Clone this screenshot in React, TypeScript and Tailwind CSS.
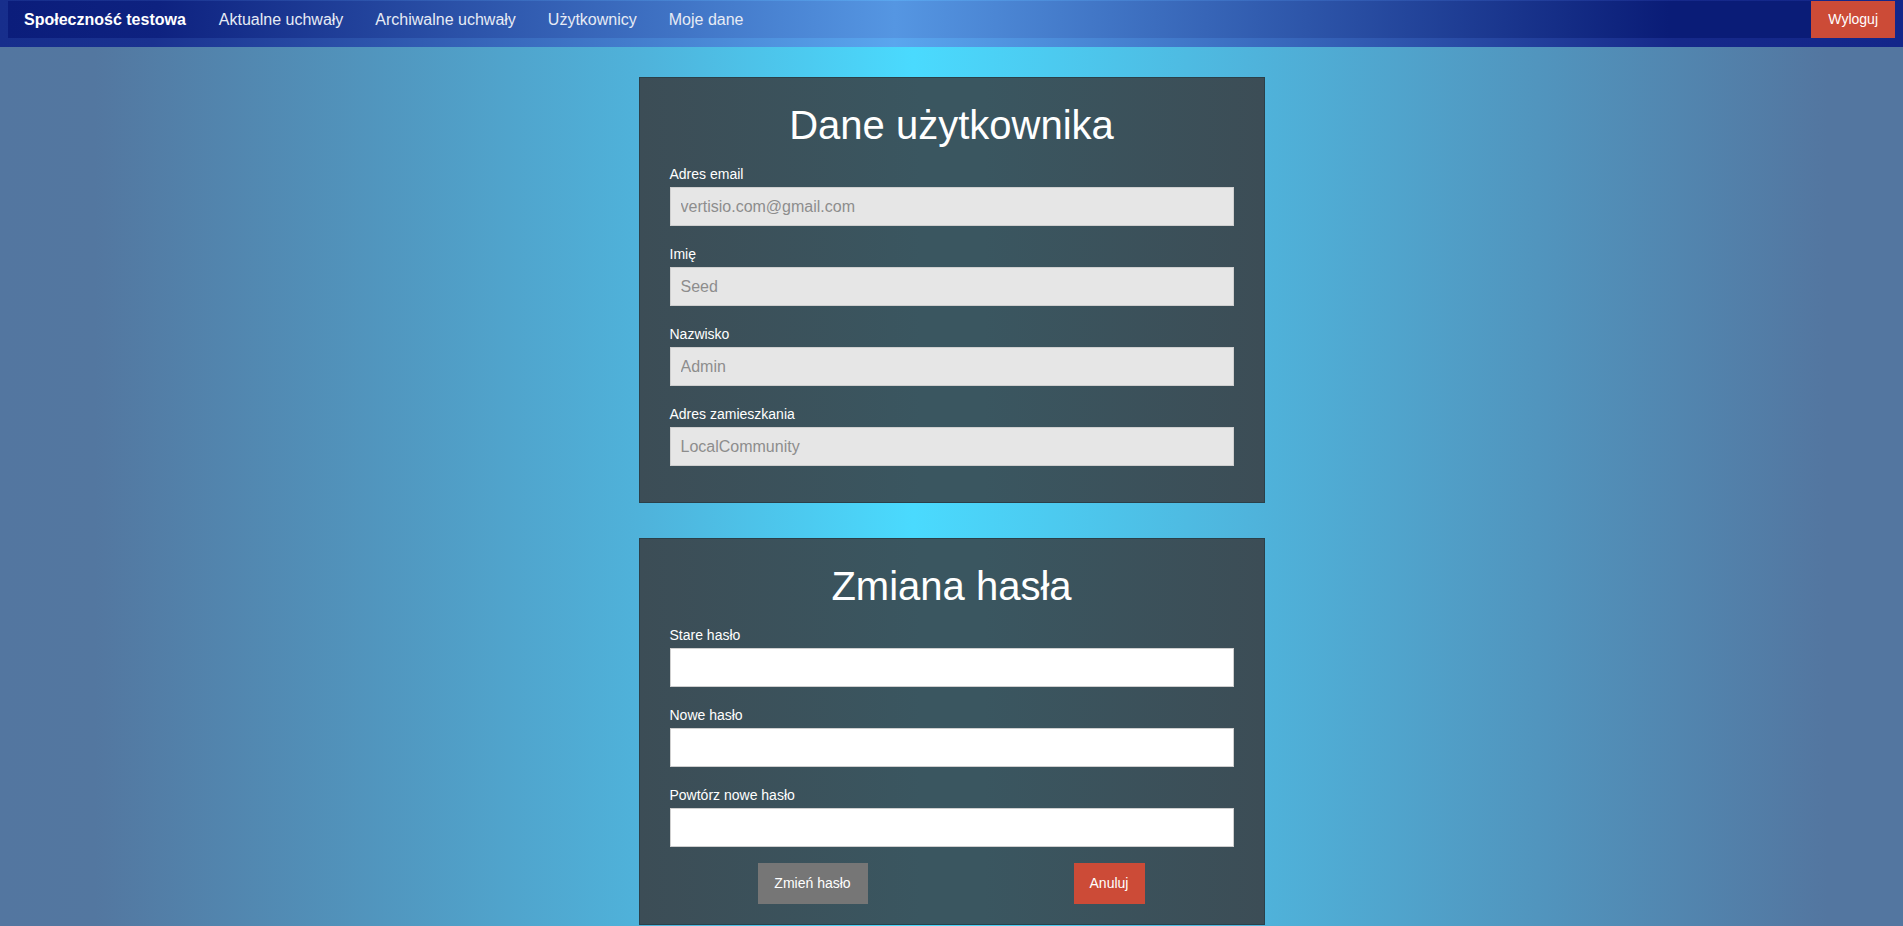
import React from 'react'

const font = { fontFamily: '"Liberation Sans", Arial, sans-serif' }

function Field({ label, value, disabled }: { label: string; value?: string; disabled?: boolean }) {
  return (
    <div className="mb-[19px]">
      <label className="block text-[14px] leading-[18px] text-white mb-[4px]">{label}</label>
      <input
        type={disabled ? 'text' : 'password'}
        defaultValue={value}
        disabled={disabled}
        className={`block w-full h-[39px] px-[10px] text-[16px] border border-[#cfcfcf] outline-none ${
          disabled ? 'bg-[#e6e6e6] text-[#8d8d8d]' : 'bg-white text-[#333]'
        }`}
      />
    </div>
  )
}

function Card({ title, children, bottom }: { title: string; children: React.ReactNode; bottom: string }) {
  return (
    <section
      className={`w-[626px] border border-[#2b4049] bg-[linear-gradient(90deg,#3c4d56_0%,#3a5660_45%,#3a5660_55%,#3c4d56_100%)] px-[30px] pt-[25px] ${bottom}`}
    >
      <h1 className="text-center text-[40px] leading-[44px] text-white mb-[18px]">{title}</h1>
      {children}
    </section>
  )
}

export default function App() {
  return (
    <div
      style={font}
      className="min-h-screen bg-[linear-gradient(90deg,#5376a0_0%,#5377a0_5%,#4fb3db_34%,#4adafe_48%,#4fb3db_66%,#5376a0_96%,#5376a0_100%)]"
    >
      {/* Navbar */}
      <nav className="h-[47px] pt-px px-2 bg-[linear-gradient(90deg,#172e8c_0%,#1a3290_8%,#5aa6ee_47%,#16298a_88%,#13268a_100%)]">
        <div className="h-[37px] flex items-center bg-[linear-gradient(90deg,#0b1d7b_0%,#0e2280_8%,#5596e2_47%,#0a1c77_88%,#0a1c77_100%)]">
          <a className="ml-[16px] mr-[17px] text-[16px] font-bold text-white">Społeczność testowa</a>
          {['Aktualne uchwały', 'Archiwalne uchwały', 'Użytkownicy', 'Moje dane'].map((l) => (
            <a key={l} className="px-4 text-[16px] text-[#e6ebf5]">
              {l}
            </a>
          ))}
          <button className="ml-auto h-full px-[17px] bg-[#cc4b37] text-white text-[14px]">Wyloguj</button>
        </div>
      </nav>

      <main className="flex flex-col items-center pt-[30px] gap-[35px]">
        <Card title="Dane użytkownika" bottom="pb-[17px]">
          <Field label="Adres email" value="vertisio.com@gmail.com" disabled />
          <Field label="Imię" value="Seed" disabled />
          <Field label="Nazwisko" value="Admin" disabled />
          <Field label="Adres zamieszkania" value="LocalCommunity" disabled />
        </Card>

        <Card title="Zmiana hasła" bottom="pb-[20px]">
          <Field label="Stare hasło" />
          <Field label="Nowe hasło" />
          <Field label="Powtórz nowe hasło" />
          <div className="flex -mt-[3px]">
            <button className="ml-[88px] h-[41px] w-[110px] bg-[#767676] text-white text-[14px]">Zmień hasło</button>
            <button className="ml-[206px] h-[41px] w-[71px] bg-[#cc4b37] text-white text-[14px]">Anuluj</button>
          </div>
        </Card>
      </main>
    </div>
  )
}
